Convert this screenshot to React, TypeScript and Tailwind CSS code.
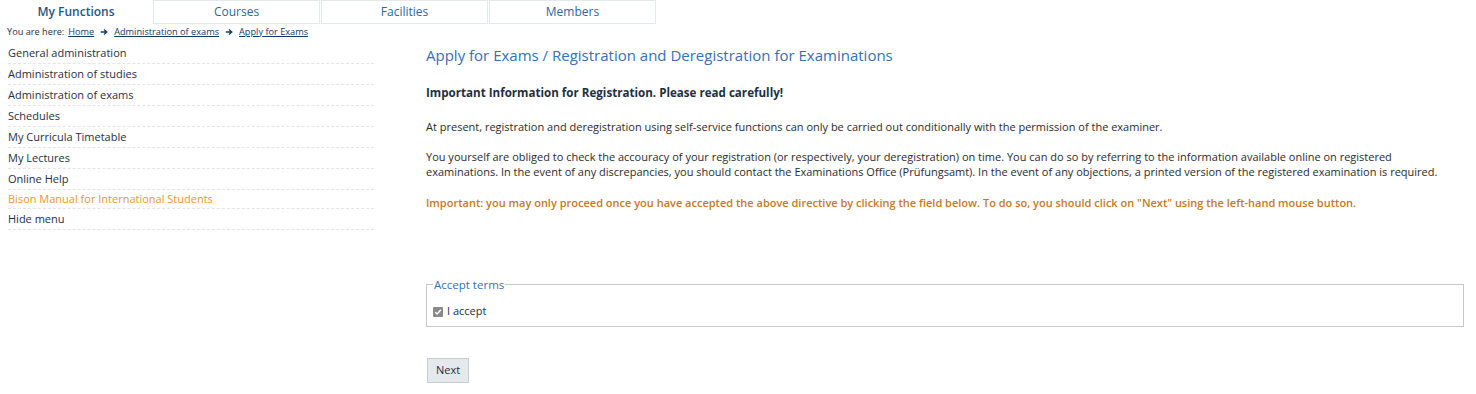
export default function App() {
  const menu = [
    'General administration',
    'Administration of studies',
    'Administration of exams',
    'Schedules',
    'My Curricula Timetable',
    'My Lectures',
    'Online Help',
  ]

  return (
    <div className="min-h-[394px] w-[1476px] bg-white text-[#1e2f3f]" style={{ fontFamily: '"Open Sans", "Noto Sans", sans-serif' }}>
      {/* tabs */}
      <div className="flex h-[24px]">
        <div className="flex w-[152px] items-center justify-center text-[12px] font-semibold text-[#1f5687]">My Functions</div>
        <Tab>Courses</Tab>
        <Tab>Facilities</Tab>
        <Tab>Members</Tab>
      </div>

      <div className="flex">
        {/* left column */}
        <div className="w-[374px] shrink-0">
          <div className="flex h-[15px] items-center gap-1 pl-[7px] text-[9.2px] text-[#1e2f3f]">
            <span>You are here:</span>
            <a className="text-[#123a66] underline">Home</a>
            <Arrow />
            <a className="text-[#123a66] underline">Administration of exams</a>
            <Arrow />
            <a className="text-[#123a66] underline">Apply for Exams</a>
          </div>
          <ul className="ml-[8px] mt-[4px]">
            {menu.map((m) => (
              <li key={m} className="flex h-[21px] items-center border-b border-dashed border-[#e4e4e4] text-[11px]">
                {m}
              </li>
            ))}
            <li className="flex h-[19px] items-center border-b border-dashed border-[#e4e4e4] text-[11px] text-[#f0952c]">
              Bison Manual for International Students
            </li>
            <li className="flex h-[21px] items-center border-b border-dashed border-[#e4e4e4] text-[11px]">Hide menu</li>
          </ul>
        </div>

        {/* main */}
        <div className="ml-[52px] w-[1038px] pt-[21px]">
          <h1 className="text-[15px] leading-[20px] text-[#3670b5]">
            Apply for Exams / Registration and Deregistration for Examinations
          </h1>
          <h2 className="mt-[20px] text-[11.6px] font-bold leading-[16px] text-[#1e2f3f]">
            Important Information for Registration. Please read carefully!
          </h2>
          <p className="mt-[18px] text-[11px] leading-[15px] text-[#2b2b2b]">
            At present, registration and deregistration using self-service functions can only be carried out conditionally with the permission of the examiner.
          </p>
          <p className="mt-[15px] text-[11px] leading-[15px] text-[#2b2b2b]">
            You yourself are obliged to check the accouracy of your registration (or respectively, your deregistration) on time. You can do so by referring to the information available online on registered
            <br />
            examinations. In the event of any discrepancies, you should contact the Examinations Office (Prüfungsamt). In the event of any objections, a printed version of the registered examination is required.
          </p>
          <p className="mt-[16px] text-[11px] font-semibold leading-[15px] text-[#c8781c]">
            Important: you may only proceed once you have accepted the above directive by clicking the field below. To do so, you should click on &quot;Next&quot; using the left-hand mouse button.
          </p>

          <fieldset className="mt-[66px] border border-[#c9c9c9] px-[6px] pb-[6px]">
            <legend className="px-[1px] text-[11.5px] text-[#3670b5]">Accept terms</legend>
            <label className="flex items-center gap-[4px] pt-[10px] text-[11px] text-[#1e2f3f]">
              <span className="flex h-[10px] w-[10px] items-center justify-center rounded-[1px] bg-[#8a8a8a]">
                <svg viewBox="0 0 10 10" className="h-[8px] w-[8px]">
                  <path d="M1.5 5.2 L4 7.5 L8.5 2.3" fill="none" stroke="white" strokeWidth="1.8" />
                </svg>
              </span>
              I accept
            </label>
          </fieldset>

          <button className="ml-[1px] mt-[31px] h-[25px] w-[42px] border border-[#cccccc] bg-[#e4e9ed] text-[11px] text-[#1e2f3f]">
            Next
          </button>
        </div>
      </div>
    </div>
  )
}

function Tab({ children }: { children: React.ReactNode }) {
  return (
    <div className="ml-[1px] flex w-[167px] items-center justify-center border border-[#e4e9ec] text-[12px] text-[#2a6a9c]">
      {children}
    </div>
  )
}

function Arrow() {
  return (
    <svg viewBox="0 0 10 10" className="mx-[2px] h-[8px] w-[8px]">
      <path d="M1 5 H8 M5 2 L8.5 5 L5 8" fill="none" stroke="#123a66" strokeWidth="1.6" />
    </svg>
  )
}
